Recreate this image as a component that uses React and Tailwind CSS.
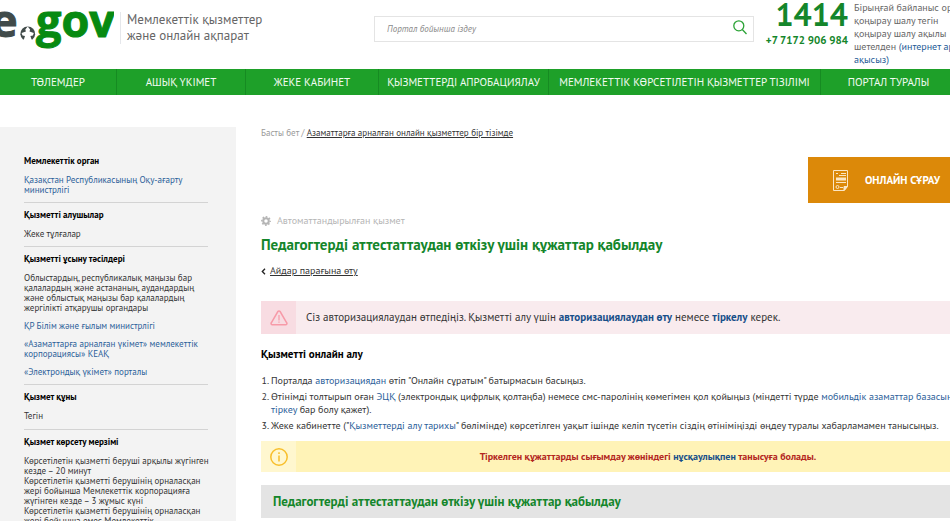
import React from "react";

const navItems = [
  "ТӨЛЕМДЕР",
  "АШЫҚ ҮКІМЕТ",
  "ЖЕКЕ КАБИНЕТ",
  "ҚЫЗМЕТТЕРДІ АПРОБАЦИЯЛАУ",
  "МЕМЛЕКЕТТІК КӨРСЕТІЛЕТІН ҚЫЗМЕТТЕР ТІЗІЛІМІ",
  "ПОРТАЛ ТУРАЛЫ",
];

function Logo() {
  return (
    <a href="#" aria-label="e.gov" className="shrink-0">
      <svg width="114" height="52" viewBox="0 0 114 52">
        <g fontFamily="'Open Sans', 'Noto Sans', sans-serif" fontWeight="700" fontSize="45" strokeWidth="1">
          <text x="-9" y="37" fill="#414b4a" stroke="#414b4a">
            e
          </text>
          <text x="36" y="37" fill="#078a11" stroke="#078a11">
            gov
          </text>
        </g>
        <path d="M23 39.500a7.400 7.400 0 1 1 9.500 0z" fill="#414b4a" />
        <path
          d="M27.700 26.500l2.400 2.900-.6 2.200 4.300 1.300-.9 2.600-2.500.4 1.300 4.100h-8l1.300-4.100-2.500-.4-.9-2.600 4.300-1.300-.6-2.200z"
          fill="#fff"
        />
      </svg>
    </a>
  );
}

function Header() {
  return (
    <header className="flex items-start h-[69px] -mr-[40px]">
      <Logo />
      <div className="ml-1.5 mt-3 w-[254px] pl-1.5 border-l border-gray-200 text-[13px] leading-4 text-[#666] whitespace-nowrap">
        Мемлекеттік қызметтер
        <br />
        және онлайн ақпарат
      </div>
      <form className="flex grow mt-4 h-[26px] border border-[#e4e4e4]">
        <input
          type="search"
          aria-label="Іздеу"
          placeholder="Портал бойынша іздеу"
          className="grow min-w-0 pl-3 text-[9px] italic outline-none placeholder:text-[#8a8a8a]"
        />
        <button type="submit" aria-label="Іздеу" className="pr-1.5 pb-1">
          <svg width="14" height="15" viewBox="0 0 14 15" fill="none" stroke="#2ba336" strokeWidth="1.3">
            <circle cx="5.800" cy="5.800" r="5" />
            <path d="M9.300 9.500l4.200 4.500" />
          </svg>
        </button>
      </form>
      <div className="ml-2 w-[86px] flex flex-col items-end font-bold text-[#14862b] whitespace-nowrap">
        <span className="text-[32px] leading-7">1414</span>
        <span className="mt-1 text-[11px] leading-4">+7 7172 906 984</span>
      </div>
      <div className="ml-1.5 mt-px w-[136px] text-[10px] leading-[13px] text-[#666] whitespace-nowrap">
        Бірыңғай байланыс орталығы
        <br />
        қоңырау шалу тегін
        <br />
        қоңырау шалу ақылы
        <br />
        шетелден{" "}
        <a href="#" className="text-[#235a96]">
          (интернет арқылы
          <br />
          ақысыз)
        </a>
      </div>
    </header>
  );
}

function Nav() {
  return (
    <nav className="-mr-[7px] grid grid-cols-[117fr_129fr_133fr_170fr_272fr_136fr] h-[26px] bg-[#1ea029]">
      {navItems.map((item) => (
        <a
          key={item}
          href="#"
          className="min-w-0 flex items-center justify-center border-r border-[#168b22] text-[11px] text-[#f2fbf2] whitespace-nowrap"
        >
          {item}
        </a>
      ))}
    </nav>
  );
}

function Block({ title, children }) {
  return (
    <section className="py-[7px] border-b border-[#d3d3d3] flex flex-col gap-2">
      <h3 className="mb-px font-bold text-black">{title}</h3>
      {children}
    </section>
  );
}

function Sidebar() {
  return (
    <aside className="w-[236px] shrink-0 bg-[#f3f3f3] px-6 pt-[22px] text-[9px] leading-[10px] text-[#333]">
      <div className="mr-1">
        <Block title="Мемлекеттік орган">
          <a href="#" className="text-[#2b6099]">
            Қазақстан Республикасының Оқу-ағарту министрлігі
          </a>
        </Block>
        <Block title="Қызметті алушылар">
          <p>Жеке тұлғалар</p>
        </Block>
        <Block title="Қызметті ұсыну тәсілдері">
          <p>
            Облыстардың, республикалық маңызы бар қалалардың және астананың, аудандардың және облыстық маңызы бар
            қалалардың жергілікті атқарушы органдары
          </p>
          <a href="#" className="text-[#2b6099]">
            ҚР Білім және ғылым министрлігі
          </a>
          <a href="#" className="text-[#2b6099]">
            «Азаматтарға арналған үкімет» мемлекеттік корпорациясы» КЕАҚ
          </a>
          <a href="#" className="text-[#2b6099]">
            «Электрондық үкімет» порталы
          </a>
        </Block>
        <Block title="Қызмет құны">
          <p className="pb-px">Тегін</p>
        </Block>
        <Block title="Қызмет көрсету мерзімі">
          <p className="-mr-2">
            Көрсетілетін қызметті беруші арқылы жүгінген кезде – 20 минут
            <br />
            Көрсетілетін қызметті берушінің орналасқан жері бойынша Мемлекеттік корпорацияға жүгінген кезде – 3 жұмыс
            күні
            <br />
            Көрсетілетін қызметті берушінің орналасқан жері бойынша емес Мемлекеттік
          </p>
        </Block>
      </div>
    </aside>
  );
}

function GearIcon() {
  return (
    <svg width="10" height="10" viewBox="0 0 20 20" fill="none" stroke="#b5b5b5">
      <circle cx="10" cy="10" r="5.500" strokeWidth="4" />
      <circle cx="10" cy="10" r="8.300" strokeWidth="3.200" strokeDasharray="3.26 3.26" strokeDashoffset="1.63" />
    </svg>
  );
}

function DocumentIcon() {
  return (
    <svg width="16" height="22" viewBox="0 0 16 22" fill="none" stroke="#fbe6c4" strokeWidth="1">
      <path d="M.5 1.500h14v16l-3 4H.5z" />
      <path d="M11 21v-3.500h3.500z" fill="#fbe6c4" />
      <path d="M3 4.500h2M8 4.500h5M6 6.500h7M3 13.500h10M7 18.500h3" strokeWidth="1" />
      <path d="M3 10h10" strokeWidth="3" />
      <circle cx="4.500" cy="18" r="1.500" />
    </svg>
  );
}

function WarningIcon() {
  return (
    <svg width="18" height="16" viewBox="0 0 18 16" fill="none" stroke="#f79aa8" strokeWidth="1.5">
      <path d="M7.900 1.500a1.300 1.300 0 0 1 2.200 0l6.600 11.300a1.200 1.200 0 0 1-1.100 1.900H2.400a1.200 1.200 0 0 1-1.100-1.900z" />
      <path d="M9 5v5.500M9 11.500v1.300" strokeWidth="1.2" />
    </svg>
  );
}

function InfoIcon() {
  return (
    <svg width="18" height="18" viewBox="0 0 18 18" fill="none" stroke="#f8bf2d" strokeWidth="1.5">
      <circle cx="9" cy="9" r="8.200" />
      <path d="M9 7.500v6M9 4.300v1.700" />
    </svg>
  );
}

function Content() {
  return (
    <main className="grow min-w-0 pl-[25px] -mr-[50px] text-[#333]">
      <div className="text-[9px] leading-3 text-[#999]">
        <a href="#">Басты бет</a> /{" "}
        <a href="#" className="underline text-[#333]">
          Азаматтарға арналған онлайн қызметтер бір тізімде
        </a>
      </div>

      <div className="flex justify-end mt-[18px]">
        <button className="w-[192px] h-[46px] pl-[25px] flex items-center gap-4 bg-[#dc8909] text-white text-[11px] font-bold whitespace-nowrap">
          <DocumentIcon />
          ОНЛАЙН СҰРАУ
        </button>
      </div>

      <div className="mt-3 flex items-center gap-1.5 text-[10px] leading-3 text-[#b5b5b5]">
        <GearIcon />
        Автоматтандырылған қызмет
      </div>
      <h1 className="mt-2 text-[15px] leading-5 font-bold text-[#14862b]">
        Педагогтерді аттестаттаудан өткізу үшін құжаттар қабылдау
      </h1>
      <a href="#" className="mt-2.5 flex items-center gap-1 text-[10px] leading-3">
        <svg width="5" height="7" viewBox="0 0 5 7" fill="none" stroke="#222" strokeWidth="1.3">
          <path d="M4 .7L1.300 3.500 4 6.300" />
        </svg>
        <span className="underline">Айдар парағына өту</span>
      </a>

      <div className="mt-6 flex items-center h-[33px] bg-[#f9ebee] text-[11px]">
        <span className="w-[35px] h-full flex items-center justify-center bg-[#f8dce2]">
          <WarningIcon />
        </span>
        <p className="pl-2.5">
          Сіз авторизациялаудан өтпедіңіз. Қызметті алу үшін{" "}
          <a href="#" className="font-bold text-[#174f89]">
            авторизациялаудан өту
          </a>{" "}
          немесе{" "}
          <a href="#" className="font-bold text-[#174f89]">
            тіркелу
          </a>{" "}
          керек.
        </p>
      </div>

      <h2 className="mt-3 text-[11px] leading-4 font-bold text-black">Қызметті онлайн алу</h2>
      <ol className="mt-3 pl-2.5 list-decimal text-[10px] leading-[13px] flex flex-col gap-[3px]">
        <li>
          Порталда{" "}
          <a href="#" className="text-[#2b6099]">
            авторизациядан
          </a>{" "}
          өтіп "Онлайн сұратым" батырмасын басыңыз.
        </li>
        <li className="whitespace-nowrap">
          Өтінімді толтырып оған{" "}
          <a href="#" className="text-[#2b6099]">
            ЭЦҚ
          </a>{" "}
          (электрондық цифрлық қолтаңба) немесе смс-паролінің көмегімен қол қойыңыз (міндетті түрде{" "}
          <a href="#" className="text-[#2b6099]">
            мобильдік азаматтар базасында
            <br />
            тіркеу
          </a>{" "}
          бар болу қажет).
        </li>
        <li>
          Жеке кабинетте ("
          <a href="#" className="text-[#2b6099]">
            Қызметтерді алу тарихы
          </a>
          " бөлімінде) көрсетілген уақыт ішінде келіп түсетін сіздің өтініміңізді өңдеу туралы хабарламамен танысыңыз.
        </li>
      </ol>

      <div className="mt-[9px] flex items-center h-[31px] bg-[#fff3b7] text-[10px] font-bold text-[#b3261e]">
        <span className="w-[35px] h-full flex items-center justify-center bg-[#fff7cf]">
          <InfoIcon />
        </span>
        <p className="grow text-center">
          Тіркелген құжаттарды сығымдау жөніндегі{" "}
          <a href="#" className="text-[#174f89]">
            нұсқаулықпен
          </a>{" "}
          танысуға болады.
        </p>
      </div>

      <h2 className="mt-[13px] h-[33px] flex items-center pl-3 bg-[#e4e4e4] text-[13px] font-bold text-[#14862b]">
        Педагогтерді аттестаттаудан өткізу үшін құжаттар қабылдау
      </h2>
    </main>
  );
}

export default function App() {
  return (
    <div className="h-screen overflow-hidden bg-white font-['PT_Sans','Noto_Sans',sans-serif]">
      <Header />
      <Nav />
      <div className="mt-8 flex">
        <Sidebar />
        <Content />
      </div>
    </div>
  );
}
